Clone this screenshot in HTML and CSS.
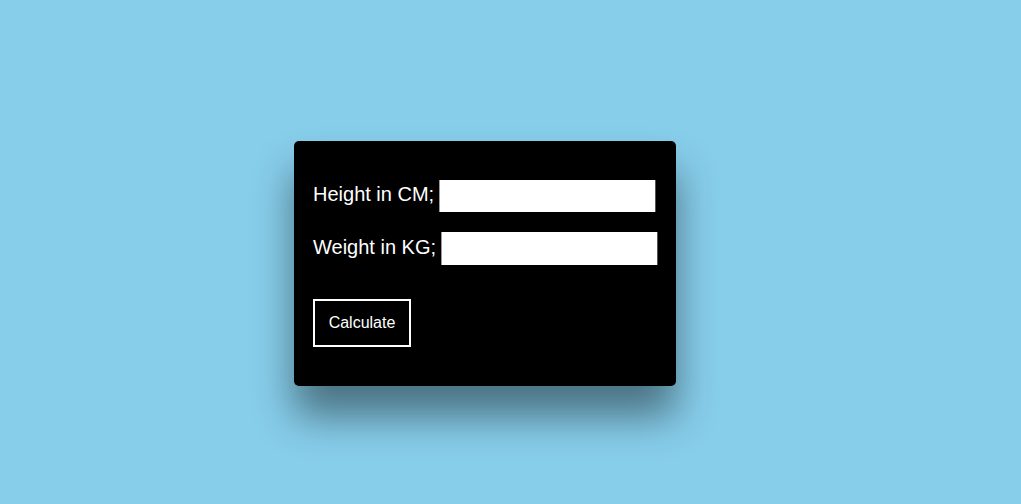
FILE: index.html
```html
<!DOCTYPE html>
<html>
<head>
<meta charset="utf-8">
<title>BMI Calculator</title>
<link rel="stylesheet" href="styles.css">
</head>
<body>
<main class="page">
  <form class="card">
    <div class="row">
      <label class="label" for="h">Height in CM;</label>
      <input class="field" id="h" type="text">
    </div>
    <div class="row row-second">
      <label class="label" for="w">Weight in KG;</label>
      <input class="field field-tall" id="w" type="text">
    </div>
    <button class="btn" type="button">Calculate</button>
  </form>
</main>
</body>
</html>
```

FILE: styles.css
```css
html, body {
  margin: 0;
  padding: 0;
  background: #87ceeb;
  height: 100%;
}
body {
  font-family: "Liberation Sans", Arial, sans-serif;
}
.page {
  padding: 141px 0 0 294px;
}
.card {
  box-sizing: border-box;
  width: 382px;
  background: #000;
  border-radius: 5px;
  padding: 39px 19px 39px 19px;
  box-shadow: 0 30px 40px rgba(0, 0, 0, 0.45);
  display: flex;
  flex-direction: column;
  align-items: flex-start;
}
.row {
  display: flex;
  align-items: center;
  gap: 5px;
  white-space: nowrap;
}
.row-second {
  margin-top: 20px;
}
.label {
  flex-shrink: 0;
  color: #fff;
  font-size: 20px;
  line-height: 23px;
  margin-top: -3px;
}
.field {
  flex-shrink: 0;
  box-sizing: border-box;
  width: 217px;
  height: 32px;
  margin: 0;
  padding: 0 4px;
  background: #fff;
  border: none;
  border-left: 1px solid #9a9a9a;
  border-right: 1px solid #555;
  font: 16px "Liberation Sans", Arial, sans-serif;
  outline: none;
}
.field-tall {
  height: 33px;
}
.btn {
  margin-top: 34px;
  box-sizing: border-box;
  width: 98px;
  height: 48px;
  padding: 0 13px;
  background: #000;
  color: #fff;
  border: 2px solid #fff;
  border-radius: 0;
  font: 16px "Liberation Sans", Arial, sans-serif;
  cursor: pointer;
}
```
